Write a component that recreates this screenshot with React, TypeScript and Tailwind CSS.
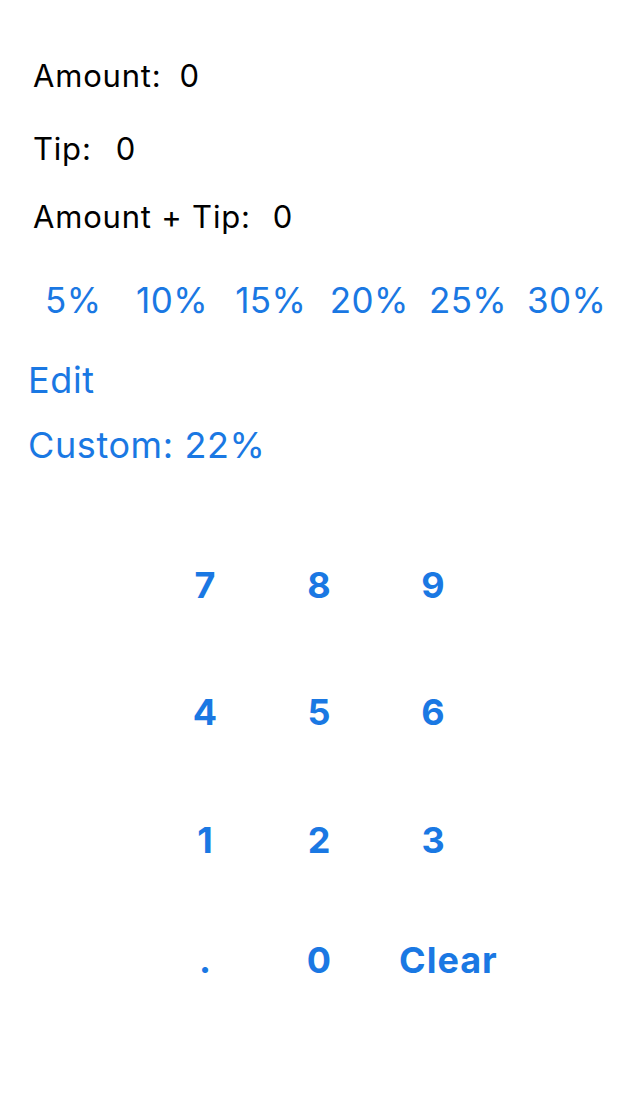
import { useState } from 'react';

const PERCENTS = [5, 10, 15, 20, 25, 30];

const KEYS: { label: string; className?: string }[][] = [
  [{ label: '7' }, { label: '8' }, { label: '9' }],
  [{ label: '4' }, { label: '5' }, { label: '6' }],
  [{ label: '1' }, { label: '2' }, { label: '3' }],
  [{ label: '.' }, { label: '0' }, { label: 'Clear', className: 'pl-[23px] tracking-[1px]' }],
];

const ROW_GAPS = ['mt-[96px]', 'mt-[83px]', 'mt-[84px]', 'mt-[76px]'];

export default function App() {
  const [amount, setAmount] = useState('0');
  const [pct, setPct] = useState(22);

  const num = parseFloat(amount) || 0;
  const tip = Math.round(num * pct) / 100;
  const fmt = (n: number) => (n === 0 ? '0' : n.toFixed(2));

  const press = (key: string) => {
    if (key === 'Clear') return setAmount('0');
    if (key === '.' && amount.includes('.')) return;
    setAmount(amount === '0' && key !== '.' ? key : amount + key);
  };

  return (
    <div className="min-h-[1096px] w-[640px] bg-white pt-[58px] text-black" style={{ fontFamily: 'Inter, "Noto Sans", sans-serif' }}>
      <div className="pl-[33px] text-[31px] leading-[36px] tracking-[0.8px]">
        <div className="h-[36px]">
          Amount:<span className="ml-[18px]">{amount}</span>
        </div>
        <div className="mt-[37px] h-[36px]">
          Tip:<span className="ml-[24px]">{fmt(tip)}</span>
        </div>
        <div className="mt-[32px] h-[36px]">
          Amount + Tip:<span className="ml-[22px]">{fmt(num + tip)}</span>
        </div>
      </div>

      <div className="mt-[44px] flex px-6 text-[35px] leading-[42px] tracking-[0.4px] text-[#1a78e3]">
        {PERCENTS.map((p) => (
          <button key={p} className="flex-1 text-center" onClick={() => setPct(p)}>
            {p}%
          </button>
        ))}
      </div>

      <div className="pl-[28px] text-[36px] leading-[44px] tracking-[0.6px] text-[#1a78e3]">
        <button className="mt-[37px] block h-[44px]">Edit</button>
        <div className="mt-[21px] h-[44px]">Custom: {pct}%</div>
      </div>

      <div className="pl-[148px] text-[36px] font-bold leading-[44px] text-[#1a78e3]">
        {KEYS.map((row, i) => (
          <div key={i} className={`${ROW_GAPS[i]} grid h-[44px] w-[342px] grid-cols-3`}>
            {row.map((k) => (
              <button key={k.label} className={`text-center ${k.className ?? ''}`} onClick={() => press(k.label)}>
                {k.label}
              </button>
            ))}
          </div>
        ))}
      </div>
    </div>
  );
}
